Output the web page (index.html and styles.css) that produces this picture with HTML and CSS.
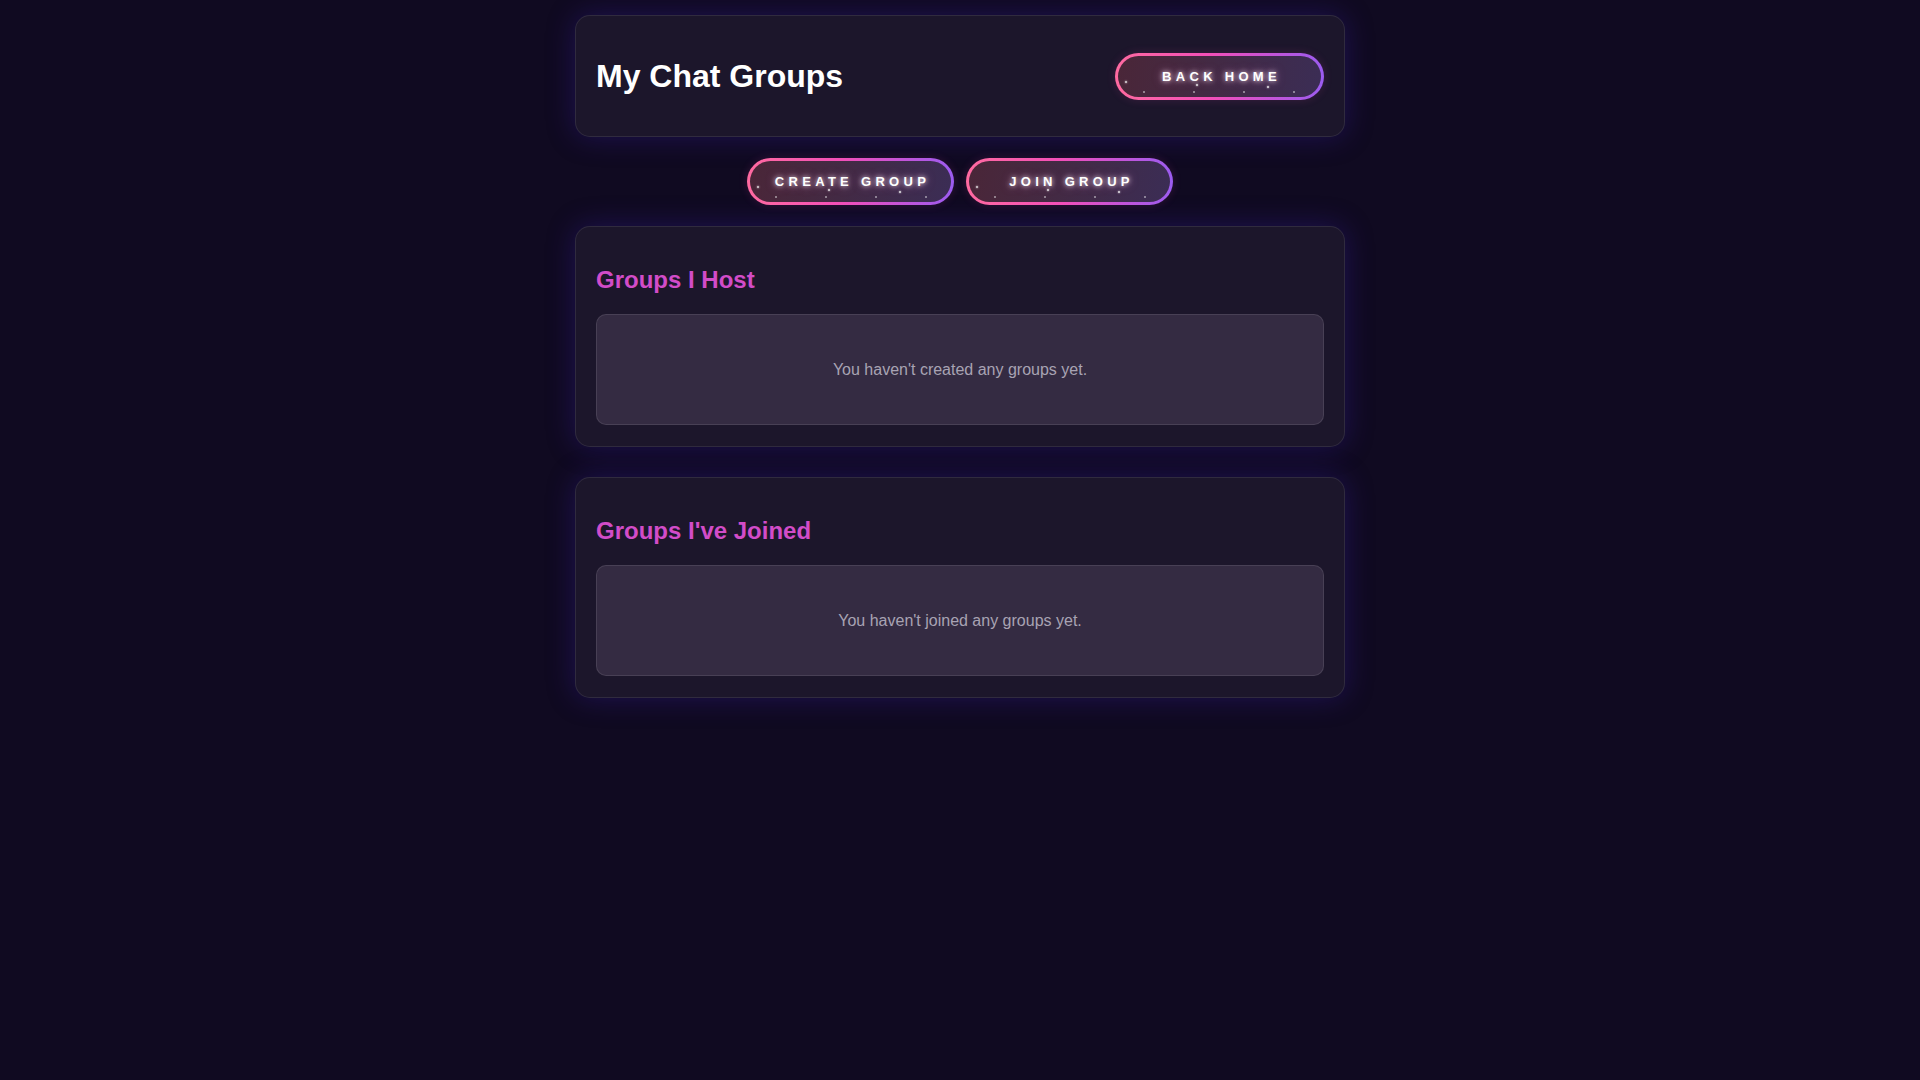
FILE: index.html
```html
<!DOCTYPE html>
<html lang="en">
<head>
<meta charset="utf-8">
<title>My Chat Groups</title>
<link rel="stylesheet" href="styles.css">
</head>
<body>
<div class="container">
  <header class="card header-card">
    <h1 class="page-title">My Chat Groups</h1>
    <a class="glow-btn" href="#"><span class="btn-label">Back Home</span><i class="dot d1"></i><i class="dot d2"></i><i class="dot d3"></i><i class="dot d4"></i><i class="dot d5"></i><i class="dot d6"></i><i class="dot d7"></i></a>
  </header>
  <div class="actions">
    <a class="glow-btn" href="#"><span class="btn-label">Create Group</span><i class="dot d1"></i><i class="dot d2"></i><i class="dot d3"></i><i class="dot d4"></i><i class="dot d5"></i><i class="dot d6"></i><i class="dot d7"></i></a>
    <a class="glow-btn" href="#"><span class="btn-label">Join Group</span><i class="dot d1"></i><i class="dot d2"></i><i class="dot d3"></i><i class="dot d4"></i><i class="dot d5"></i><i class="dot d6"></i><i class="dot d7"></i></a>
  </div>
  <section class="card section-card">
    <h2 class="section-title">Groups I Host</h2>
    <div class="empty-box">You haven't created any groups yet.</div>
  </section>
  <section class="card section-card">
    <h2 class="section-title">Groups I've Joined</h2>
    <div class="empty-box">You haven't joined any groups yet.</div>
  </section>
</div>
</body>
</html>
```
FILE: styles.css
```css
html, body {
  margin: 0;
  padding: 0;
}
body {
  background: #100a21;
  font-family: "Liberation Sans", Arial, sans-serif;
  color: #ffffff;
  min-height: 1080px;
}
.container {
  width: 770px;
  margin: 0 auto;
  padding-top: 15px;
}
.card {
  background: #1c162b;
  border: 1px solid rgba(255, 255, 255, 0.09);
  border-radius: 15px;
  box-shadow: 0 0 28px rgba(50, 28, 150, 0.42);
  padding: 0 20px;
}
.header-card {
  display: flex;
  align-items: center;
  justify-content: space-between;
  margin-bottom: 21px;
  height: 122px;
  box-sizing: border-box;
}
.page-title {
  margin: 0;
  font-size: 32px;
  font-weight: 700;
  color: #ffffff;
}
.actions {
  display: flex;
  justify-content: center;
  gap: 12px;
  margin-bottom: 21px;
}
.glow-btn {
  position: relative;
  display: inline-flex;
  align-items: center;
  justify-content: center;
  box-sizing: border-box;
  height: 47px;
  padding: 0 10px;
  border-radius: 999px;
  border: 3px solid transparent;
  background:
    linear-gradient(100deg, #4a2638 0%, #432a44 45%, #3b2d55 100%) padding-box,
    linear-gradient(90deg, #ff6aa0 0%, #f34fb8 45%, #c454d8 75%, #9b5cf0 100%) border-box;
  text-decoration: none;
  white-space: nowrap;
  box-shadow: 0 0 10px rgba(240, 80, 180, 0.15);
}
.header-card .glow-btn {
  width: 209px;
}
.actions .glow-btn {
  width: 207px;
}
.btn-label {
  font-family: "Liberation Sans", Arial, sans-serif;
  font-size: 13px;
  font-weight: 700;
  letter-spacing: 4.3px;
  text-transform: uppercase;
  color: #ffffff;
  margin-right: -4px;
  white-space: nowrap;
  text-shadow: 0 0 5px rgba(255, 255, 255, 0.85), 0 0 10px rgba(255, 140, 220, 0.5);
}
.dot {
  position: absolute;
  width: 2px;
  height: 2px;
  border-radius: 50%;
  background: rgba(255, 255, 255, 0.55);
}
.d1 { left: 7px; top: 25px; background: rgba(255,255,255,0.85); box-shadow: 0 0 2px #fff; }
.d2 { left: 25px; top: 35px; }
.d3 { left: 78px; top: 28px; background: rgba(255,255,255,0.9); box-shadow: 0 0 2px #fff; }
.d4 { left: 75px; top: 35px; }
.d5 { left: 125px; top: 35px; }
.d6 { left: 149px; top: 30px; background: rgba(255,255,255,0.9); box-shadow: 0 0 2px #fff; }
.d7 { left: 175px; top: 35px; }
.section-card {
  padding: 20px 20px 21px;
  margin-bottom: 30px;
}
.section-title {
  margin: 19px 0 20px;
  font-size: 24px;
  font-weight: 700;
  color: #d24cc8;
  line-height: 28px;
}
.empty-box {
  background: #342b42;
  border: 1px solid rgba(255, 255, 255, 0.1);
  border-radius: 10px;
  height: 109px;
  display: flex;
  align-items: center;
  justify-content: center;
  font-size: 16px;
  color: #a8a3b3;
}
```
